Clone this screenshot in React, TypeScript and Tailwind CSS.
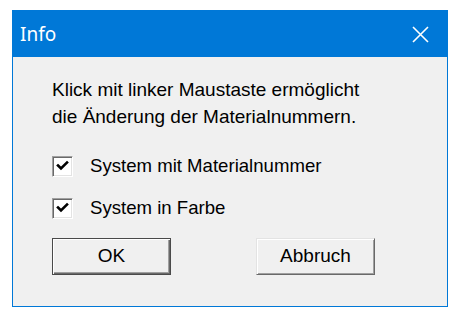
import React, { useState } from 'react';

// Boîte de dialogue "Info" au style Windows classique
const font = { fontFamily: '"Liberation Sans", Arial, sans-serif' };

const Checkbox: React.FC<{ label: string; checked: boolean; onToggle: () => void }> = ({ label, checked, onToggle }) => (
  <label className="flex items-center h-[22px] cursor-default" onClick={onToggle}>
    <span className="w-[21px] h-[21px] bg-white border border-t-[#a0a0a0] border-l-[#a0a0a0] border-r-white border-b-white shadow-[inset_1px_1px_0_#696969,inset_-1px_-1px_0_#e3e3e3] flex items-center justify-center">
      {checked && (
        <svg width="13" height="12" viewBox="0 0 13 12">
          <path d="M2 5.5 L5 8.5 L11 2.5" fill="none" stroke="#000" strokeWidth="2.6" strokeLinecap="square" />
        </svg>
      )}
    </span>
    <span className="ml-[17px] text-[18.6px] text-black leading-none">{label}</span>
  </label>
);

export default function App() {
  const [withNumber, setWithNumber] = useState(true);
  const [inColor, setInColor] = useState(true);

  return (
    <div className="w-[465px] h-[319px] bg-white pt-[10px] pl-[12px]" style={font}>
      <div className="w-[436px] h-[297px] border border-[#0078d7] flex flex-col bg-[#f0f0f0]">
        {/* Barre de titre */}
        <div className="h-[46px] bg-[#0078d7] flex items-center justify-between pl-[7px] pr-[18px]">
          <span className="text-white text-[19px]" style={{ fontFamily: '"Noto Sans", "Open Sans", sans-serif' }}>Info</span>
          <svg width="17" height="17" viewBox="0 0 17 17">
            <path d="M1 1 L16 16 M16 1 L1 16" stroke="#fff" strokeWidth="1.6" />
          </svg>
        </div>

        {/* Contenu */}
        <div className="flex-1 flex flex-col pl-[39px] pt-[19px]">
          <p className="text-[19px] leading-[27px] text-black">
            Klick mit linker Maustaste ermöglicht
            <br />
            die Änderung der Materialnummern.
          </p>

          <div className="flex flex-col gap-[20px] mt-[25px]">
            <Checkbox label="System mit Materialnummer" checked={withNumber} onToggle={() => setWithNumber(!withNumber)} />
            <Checkbox label="System in Farbe" checked={inColor} onToggle={() => setInColor(!inColor)} />
          </div>

          <div className="flex gap-[85px] mt-[19px]">
            <button className="w-[119px] h-[37px] border border-[#4a4a4a] shadow-[inset_1px_1px_0_#fff,inset_-1px_-1px_0_#696969,inset_-2px_-2px_0_#a0a0a0] text-[19px] text-black bg-[#f0f0f0]">
              OK
            </button>
            <button className="w-[119px] h-[37px] border border-t-[#e3e3e3] border-l-[#e3e3e3] border-r-[#696969] border-b-[#696969] shadow-[inset_1px_1px_0_#fff,inset_-1px_-1px_0_#a0a0a0] text-[19px] text-black bg-[#f0f0f0]">
              Abbruch
            </button>
          </div>
        </div>
      </div>
    </div>
  );
}
